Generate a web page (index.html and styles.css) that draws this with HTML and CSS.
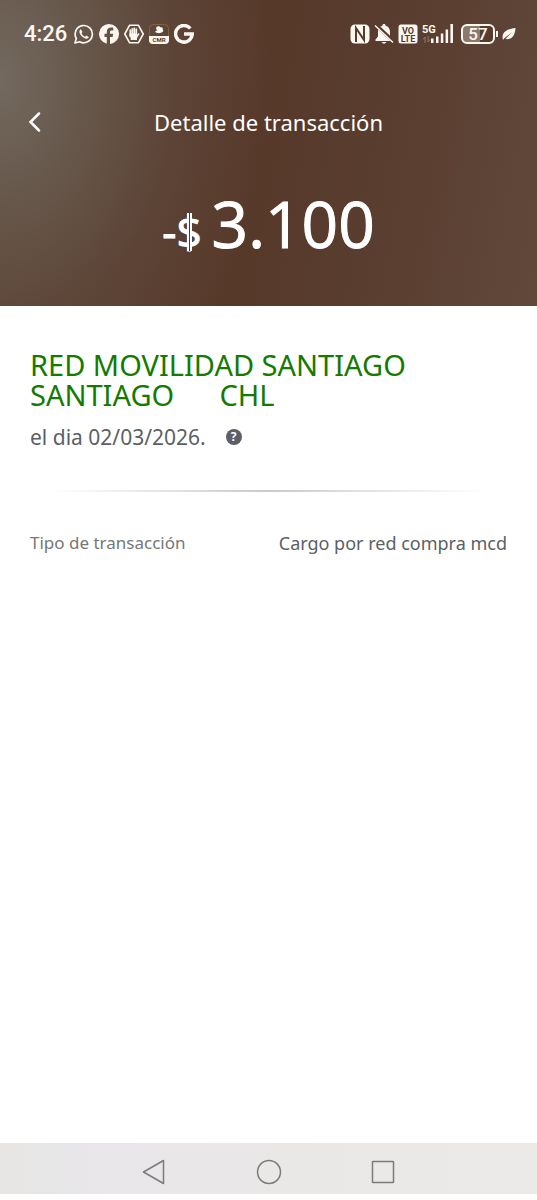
FILE: index.html
```html
<!DOCTYPE html>
<html lang="es">
<head>
<meta charset="utf-8">
<meta name="viewport" content="width=device-width, initial-scale=1">
<title>Detalle de transacción</title>
<link rel="stylesheet" href="styles.css">
</head>
<body>
<div class="screen">
  <header class="hero">
    <div class="status">
      <div class="status-group">
        <time class="clock">4:26</time>
        <svg class="icon" viewBox="0 0 20 20" aria-hidden="true"><path d="M1 19l1.300-4.600A8.600 8.600 0 1 1 5.700 17.700z" fill="none" stroke="currentColor" stroke-width="1.700" stroke-linejoin="round"/><path d="M6.900 5.300c-.8.200-1.700 1.400-1.500 2.700.5 3.100 3.500 6 6.600 6.700 1.300.2 2.600-.7 2.800-1.700l-2.500-1.500-1.300 1.200c-1.700-.7-2.900-2-3.500-3.500l1-1.300z" fill="currentColor"/></svg>
        <svg class="icon" viewBox="0 0 20 20" aria-hidden="true"><path d="M10 0a10 10 0 0 0-2.200 19.750V13H5.500V9.800h2.300V8.200c0-3.300 1.700-4.700 4.600-4.700.8 0 1.500.1 1.900.2v2.800h-1.400c-1.500 0-1.900.6-1.900 1.900v1.400h3.200L13.600 13H11v6.950A10 10 0 0 0 10 0z" fill="currentColor"/></svg>
        <svg class="icon" viewBox="0 0 20 20" aria-hidden="true"><path d="M5.500 1.300h9L19.200 10l-4.700 8.700h-9L.8 10z" fill="none" stroke="currentColor" stroke-width="1.600" stroke-linejoin="round"/><path d="M6.300 6v6M8.300 4.800v6M10.300 4.300v6M12.300 5.200v6" stroke="currentColor" stroke-width="1.700" stroke-linecap="round"/><path d="M5.500 9.500h7.600v1.300l1.300-1.600q1.200-.3 1.100.7L13 14v2H6.700v-2l-1.200-2z" fill="currentColor"/></svg>
        <svg class="icon" viewBox="0 0 20 20" aria-hidden="true"><rect x=".5" y=".5" width="19" height="19" rx="4" fill="none" stroke="#8d6650" stroke-width=".8"/><path d="M0 12h20v4a4 4 0 0 1-4 4H4a4 4 0 0 1-4-4z" fill="currentColor"/><path d="M7.500 3c1-1.300 3.400-1 4 .5 1.500-.5 2.700.5 2.200 1.900 1 .8.500 2.800-1.200 3.100-2 1-4.900.8-6.500-.4.500-1 1.500-1.500 2.700-1.500C7.200 6 6.600 4.300 7.500 3z" fill="currentColor"/><text x="10" y="18" class="tiny-brand">CMR</text></svg>
        <svg class="icon" viewBox="0 0 20 20" aria-hidden="true"><path d="M16.300 4.500A8.300 8.300 0 1 0 18.200 10H10" fill="none" stroke="currentColor" stroke-width="3.500"/></svg>
      </div>
      <div class="status-group status-group-end">
        <svg class="icon" viewBox="0 0 20 20" aria-hidden="true"><rect x=".5" y=".5" width="19" height="19" rx="4.500" fill="currentColor"/><path d="M6 18V4l8 12V2" fill="none" stroke="#573b2c" stroke-width="2"/></svg>
        <svg class="icon" viewBox="0 0 20 20" aria-hidden="true"><path d="M10 0a1.500 1.500 0 0 1 1.500 1.700C14.700 2.400 16 5 16 8v4.500l2.500 3V17h-17v-1.500l2.500-3V8c0-3 1.300-5.600 4.500-6.300A1.500 1.500 0 0 1 10 0zM7.500 18h5q-2.500 3.500-5 0z" fill="currentColor"/><path d="M2 1l18 17" stroke="#573b2c" stroke-width="3.600"/><path d="M1 1.500l18 17" stroke="currentColor" stroke-width="1.500"/></svg>
        <svg class="icon" viewBox="0 0 20 20" aria-hidden="true"><rect x=".5" y=".5" width="19" height="19" rx="2.500" fill="currentColor"/><text x="10" y="9.500" class="volte">VO</text><text x="10" y="17.500" class="volte">LTE</text></svg>
        <svg class="signal" viewBox="0 0 32 20" aria-hidden="true"><text x="0" y="9" class="network">5G</text><path d="M9 19v-4.500h2.500V19zM14 19v-6.500h2.500V19zM18.800 19V9.500h2.500V19zM23.600 19V5.500h2.500V19zM28.400 19V0h2.600v19z" fill="currentColor"/><path d="M3 19v-6l-2 2.500M6 12v6l2-2.500" fill="none" stroke="#94796b"/></svg>
        <div class="battery"><span class="battery-level">57</span></div>
        <svg class="leaf" viewBox="0 0 14 14" aria-hidden="true"><path d="M1 13C-1 6 4 2 13.500 1 13 9 9.500 13 3.500 12L10 5 2 11.500z" fill="currentColor"/></svg>
      </div>
    </div>
    <nav class="titlebar">
      <button class="back" type="button" aria-label="Volver"><svg viewBox="0 0 12 20" aria-hidden="true"><path d="M10.500 1.500L2 10l8.500 8.500" fill="none" stroke="currentColor" stroke-width="2.500" stroke-linecap="round"/></svg></button>
      <h1 class="title">Detalle de transacción</h1>
    </nav>
    <p class="amount"><span class="minus">-</span><span class="currency">$</span><span class="value">3.100</span></p>
  </header>
  <main class="details">
    <h2 class="merchant">RED MOVILIDAD SANTIAGO
SANTIAGO      CHL</h2>
    <div class="date-row"><span>el dia 02/03/2026.</span><button class="help" type="button" aria-label="Ayuda">?</button></div>
    <hr class="divider">
    <dl class="row"><dt>Tipo de transacción</dt><dd>Cargo por red compra mcd</dd></dl>
  </main>
  <nav class="system-nav" aria-label="Sistema">
    <button type="button" aria-label="Atrás"><svg viewBox="0 0 26 26" aria-hidden="true"><path d="M21.500 1.500v23L1.500 13z"/></svg></button>
    <button type="button" aria-label="Inicio"><svg viewBox="0 0 26 26" aria-hidden="true"><circle cx="13" cy="13" r="11.500"/></svg></button>
    <button type="button" aria-label="Recientes"><svg viewBox="0 0 26 26" aria-hidden="true"><rect x="2.500" y="2.500" width="21" height="21" rx=".5"/></svg></button>
  </nav>
</div>
</body>
</html>
```
FILE: styles.css
```css
* { box-sizing: border-box; }
body, h1, h2, p, dl, dd { margin: 0; }
body {
  background: #fff;
  font-family: "Noto Sans", "Open Sans", sans-serif;
}
button {
  padding: 0;
  border: 0;
  background: none;
  color: inherit;
  font: inherit;
}
.screen {
  display: flex;
  flex-direction: column;
  min-height: 100vh;
  padding-bottom: 6px;
}
.hero {
  padding-bottom: 37px;
  color: #fff;
  background:
    radial-gradient(ellipse 270px 380px at 0 80px, #73695f 0%, rgba(108, 96, 85, 0.75) 30%, rgba(100, 82, 69, 0.35) 65%, transparent 100%),
    linear-gradient(100deg, #5b4234 0%, #57392a 48%, #583c2d 65%, #61483b 100%);
}
.status {
  display: flex;
  justify-content: space-between;
  padding: 20px 21px 0 24px;
  height: 72px;
  color: #fdf7f2;
}
.status-group {
  display: flex;
  align-items: center;
  gap: 5px;
  height: 28px;
}
.status-group-end { gap: 4px; }
.clock {
  padding-right: 2px;
  font: 500 22px/28px Roboto, sans-serif;
}
.icon { width: 20px; height: 20px; }
.tiny-brand { font: 700 6px Roboto, sans-serif; text-anchor: middle; fill: #573b2c; }
.volte { font: 700 9px Roboto, sans-serif; text-anchor: middle; fill: #573b2c; }
.network { font: 700 11px Roboto, sans-serif; fill: currentColor; }
.signal { width: 32px; height: 20px; }
.battery {
  position: relative;
  width: 34px;
  height: 20px;
  margin: 0 3px;
  border: 2px solid #fdf7f2;
  border-radius: 6px;
  background: linear-gradient(90deg, #8d786c 57%, #573b2c 57%);
  text-align: center;
}
.battery::after {
  content: "";
  position: absolute;
  top: 5px;
  right: -5px;
  width: 2px;
  height: 6px;
  background: #fdf7f2;
}
.battery-level { display: block; font: 500 17px/16px Roboto, sans-serif; }
.leaf { width: 14px; height: 14px; }
.titlebar {
  display: grid;
  grid-template-columns: 40px 1fr 40px;
  align-items: center;
  height: 100px;
  padding: 0 28px;
}
.back { display: flex; width: 40px; height: 40px; align-items: center; }
.back svg { width: 13px; height: 20px; }
.title { font-size: 22px; line-height: 32px; font-weight: 400; text-align: center; }
.amount {
  display: flex;
  justify-content: center;
  align-items: baseline;
  padding-top: 14px;
  font-size: 64px;
  line-height: 76px;
  -webkit-text-stroke: 1px #fff;
}
.minus { font-size: 44px; }
.currency { position: relative; margin-right: 10px; font-size: 44px; }
.currency::after {
  content: "";
  position: absolute;
  top: 20px;
  left: 50%;
  width: 1px;
  height: 38px;
  margin-left: -2px;
  border: solid #fff;
  border-width: 0 2px;
  background: #57392a;
}
.value { font-family: "Open Sans", "Noto Sans", sans-serif; }
.details { flex: 1; padding: 44px 30px 0; color: #5c5f64; }
.merchant {
  color: #147a00;
  font-size: 29px;
  line-height: 30px;
  font-weight: 400;
  white-space: pre-wrap;
}
.date-row {
  display: flex;
  align-items: center;
  gap: 20px;
  margin-top: 11px;
  font-size: 21px;
  line-height: 32px;
}
.help {
  width: 16px;
  height: 16px;
  border-radius: 50%;
  background: #5c5f68;
  color: #fff;
  font-size: 12px;
  line-height: 16px;
  font-weight: 700;
}
.divider {
  height: 2px;
  margin: 37px 20px 36px;
  border: 0;
  background: linear-gradient(90deg, transparent, #c6cbd2, transparent);
}
.row {
  display: flex;
  justify-content: space-between;
  line-height: 30px;
}
.row dt { font-size: 17px; color: #777; }
.row dd { font-size: 18px; }
.system-nav {
  display: flex;
  justify-content: center;
  gap: 88px;
  height: 51px;
  padding: 6px 0 0;
  background: linear-gradient(90deg, #e7e6e4, #e8e6e9 15%, #eae8e7 50%, #ebeae9);
}
.system-nav button { display: grid; place-items: center; width: 26px; }
.system-nav svg { width: 26px; height: 26px; fill: none; stroke: #7d7b79; stroke-width: 1.5; stroke-linejoin: round; }
```
